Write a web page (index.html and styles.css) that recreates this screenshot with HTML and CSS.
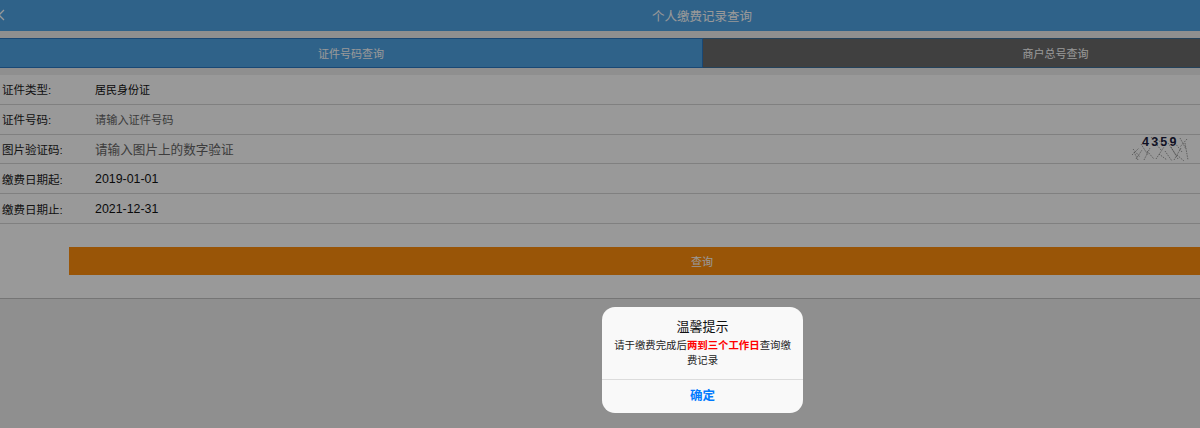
FILE: index.html
```html
<!DOCTYPE html>
<html lang="zh-CN">
<head>
  <meta charset="UTF-8">
  <meta name="viewport" content="width=device-width, initial-scale=1.0">
  <title>个人缴费记录查询</title>
  <link rel="stylesheet" href="styles.css">
</head>
<body>
  <header class="topbar">
    <svg class="back" width="6" height="12" viewBox="0 0 6 12"><path d="M5 1 L0 6 L5 11" fill="none" stroke="#fff" stroke-width="1.3"/></svg>
    <span class="topbar-title">个人缴费记录查询</span>
  </header>

  <div class="tabs">
    <div class="tab active">证件号码查询</div>
    <div class="tab merchant">商户总号查询</div>
  </div>

  <div class="form">
    <div class="row">
      <span class="label">证件类型:</span>
      <span class="value">居民身份证</span>
    </div>
    <div class="row">
      <span class="label">证件号码:</span>
      <span class="value hint">请输入证件号码</span>
    </div>
    <div class="row">
      <span class="label">图片验证码:</span>
      <span class="value hint big">请输入图片上的数字验证</span>
      <div class="captcha">
        <svg class="noise" width="60" height="28" viewBox="0 0 60 28">
          <path d="M2 14 L9 22 M5 24 L11 15 M10 9 L17 20 M13 25 L19 13 M20 2 L30 15 M25 24 L33 12 M34 16 L41 26 M37 8 L45 20 M43 25 L50 13 M49 3 L55 14 M54 8 L57 25 M7 25 L3 17 M31 8 L24 3 M46 20 L53 26 M1 20 L8 13 M16 16 L23 24 M28 19 L36 25 M40 12 L47 24 M51 17 L44 8 M56 4 L49 12" fill="none" stroke="#777" stroke-width=".7" stroke-dasharray="1.5 1"/>
        </svg>
        <span class="captcha-code">4359</span>
      </div>
    </div>
    <div class="row">
      <span class="label">缴费日期起:</span>
      <span class="value date">2019-01-01</span>
    </div>
    <div class="row">
      <span class="label">缴费日期止:</span>
      <span class="value date">2021-12-31</span>
    </div>
    <div class="actions">
      <button class="submit">查询</button>
    </div>
  </div>

  <div class="overlay"></div>
  <div class="dialog">
    <div class="dialog-body">
      <h3>温馨提示</h3>
      <p>请于缴费完成后<b>两到三个工作日</b>查询缴费记录</p>
    </div>
    <div class="dialog-btn">确定</div>
  </div>
</body>
</html>
```

FILE: styles.css
```css
html, body {
  height: 100%;
}

body {
  margin: 0;
  background: #eeeeee;
  font-family: "Liberation Sans", "Noto Sans CJK SC", sans-serif;
  color: #111;
  overflow: hidden;
}

.topbar {
  position: relative;
  height: 31px;
  background: #4fa3e4;
  display: flex;
  align-items: center;
  justify-content: center;
  padding-left: 204px;
  box-sizing: border-box;
}

.back {
  position: absolute;
  left: -1px;
  top: 9px;
}

.topbar-title {
  color: #fff;
  font-size: 12.5px;
}

.tabs {
  display: flex;
  margin: 7px 0;
  height: 30px;
}

.tab {
  flex: 1;
  display: flex;
  align-items: center;
  justify-content: center;
  background: #6c6c6c;
  color: #fff;
  font-size: 11px;
  border-top: 1px solid #3f6f96;
  border-bottom: 1px solid #3f6f96;
}

.tab.active {
  flex: 0 0 703px;
  background: #4fa3e4;
  border-color: #2a78c4;
  border-right: 1px solid #2a78c4;
  box-sizing: border-box;
}

.tab.merchant {
  padding-left: 208px;
}

.form {
  background: #fff;
  height: 223px;
  border-bottom: 1px solid #c4c4c4;
}

.row {
  display: flex;
  align-items: center;
  height: 29.8px;
  box-sizing: border-box;
  border-bottom: 1px solid #d6d6d6;
}

.label {
  flex: 0 0 95px;
  padding-left: 2px;
  box-sizing: border-box;
  font-size: 11.5px;
  color: #222;
}

.value {
  flex: 1;
  font-size: 11px;
}

.hint {
  color: #666;
  font-size: 11.2px;
}

.hint.big {
  font-size: 12.6px;
}

.date {
  font-size: 12.4px;
}

.captcha {
  position: relative;
  width: 60px;
  height: 28px;
  margin-right: 9px;
}

.noise {
  display: block;
}

.captcha-code {
  position: absolute;
  left: 11px;
  top: 0;
  font-size: 12.5px;
  font-weight: bold;
  letter-spacing: 2.2px;
  color: #1c1c3c;
}

.actions {
  padding: 23px 0 0 69px;
}

.submit {
  display: block;
  width: 100%;
  height: 28px;
  border: none;
  background: #ff8e0d;
  color: #fff;
  font-family: inherit;
  font-size: 11px;
  padding: 0 0 0 135px;
}

.overlay {
  position: fixed;
  inset: 0;
  background: rgba(0, 0, 0, 0.4);
}

.dialog {
  position: absolute;
  left: 602px;
  top: 307px;
  width: 201px;
  height: 106px;
  background: #f9f9f9;
  border-radius: 13px;
  display: flex;
  flex-direction: column;
}

.dialog-body {
  flex: 1;
  text-align: center;
  padding: 11px 11px 0;
  border-bottom: 1px solid #dcdcdc;
}

.dialog-body h3 {
  margin: 0;
  font-size: 13px;
  font-weight: normal;
  line-height: 17px;
  color: #111;
}

.dialog-body p {
  margin: 3px 0 0;
  font-size: 10.4px;
  line-height: 15px;
  color: #222;
}

.dialog-body b {
  color: #f00;
}

.dialog-btn {
  height: 33px;
  line-height: 33px;
  text-align: center;
  font-size: 12.5px;
  font-weight: bold;
  color: #007aff;
}
```
